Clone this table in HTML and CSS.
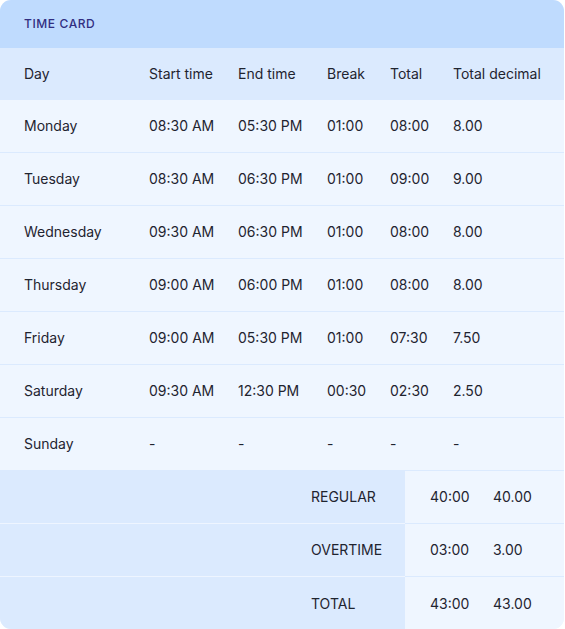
FILE: index.html
```html
<!DOCTYPE html>
<html>
<head>
<meta charset="utf-8">
<link rel="stylesheet" href="styles.css">
</head>
<body>
<div class="card">
  <div class="title">TIME CARD</div>
  <div class="row head">
    <div class="cell first">Day</div><div class="cell">Start time</div><div class="cell">End time</div><div class="cell">Break</div><div class="cell">Total</div><div class="cell">Total decimal</div>
  </div>
  <div class="row">
    <div class="cell first">Monday</div><div class="cell">08:30 AM</div><div class="cell">05:30 PM</div><div class="cell">01:00</div><div class="cell">08:00</div><div class="cell">8.00</div>
  </div>
  <div class="row">
    <div class="cell first">Tuesday</div><div class="cell">08:30 AM</div><div class="cell">06:30 PM</div><div class="cell">01:00</div><div class="cell">09:00</div><div class="cell">9.00</div>
  </div>
  <div class="row">
    <div class="cell first">Wednesday</div><div class="cell">09:30 AM</div><div class="cell">06:30 PM</div><div class="cell">01:00</div><div class="cell">08:00</div><div class="cell">8.00</div>
  </div>
  <div class="row">
    <div class="cell first">Thursday</div><div class="cell">09:00 AM</div><div class="cell">06:00 PM</div><div class="cell">01:00</div><div class="cell">08:00</div><div class="cell">8.00</div>
  </div>
  <div class="row">
    <div class="cell first">Friday</div><div class="cell">09:00 AM</div><div class="cell">05:30 PM</div><div class="cell">01:00</div><div class="cell">07:30</div><div class="cell">7.50</div>
  </div>
  <div class="row">
    <div class="cell first">Saturday</div><div class="cell">09:30 AM</div><div class="cell">12:30 PM</div><div class="cell">00:30</div><div class="cell">02:30</div><div class="cell">2.50</div>
  </div>
  <div class="row">
    <div class="cell first">Sunday</div><div class="cell">-</div><div class="cell">-</div><div class="cell">-</div><div class="cell">-</div><div class="cell">-</div>
  </div>
  <div class="sum">
    <div class="label">REGULAR</div>
    <div class="vals"><span class="val">40:00</span><span class="val">40.00</span></div>
  </div>
  <div class="sum">
    <div class="label">OVERTIME</div>
    <div class="vals"><span class="val">03:00</span><span class="val">3.00</span></div>
  </div>
  <div class="sum last">
    <div class="label">TOTAL</div>
    <div class="vals"><span class="val">43:00</span><span class="val">43.00</span></div>
  </div>
</div>
</body>
</html>
```
FILE: styles.css
```css
html, body {
  margin: 0;
  padding: 0;
  background: #ffffff;
}
body {
  font-family: Inter, "Noto Sans", sans-serif;
  font-size: 14px;
  color: #1f2430;
}
.card {
  width: 564px;
  height: 629px;
  border-radius: 11px;
  overflow: hidden;
  background: #eff6ff;
}
.title {
  height: 48px;
  box-sizing: border-box;
  padding: 0 0 2px 24px;
  display: flex;
  align-items: center;
  background: #bfdbfe;
  color: #312e81;
  font-size: 12px;
  font-weight: 500;
  letter-spacing: 0.6px;
}
.row {
  display: grid;
  grid-template-columns: 125px 89px 89px 63px 63px 1fr;
  height: 53px;
  box-sizing: border-box;
  border-bottom: 1px solid #dbeafe;
  background: #eff6ff;
}
.row.head {
  height: 52px;
  border-bottom: none;
  background: #dbeafe;
}
.cell {
  display: flex;
  align-items: center;
  padding: 0 0 1px 24px;
  white-space: nowrap;
}
.sum {
  display: grid;
  grid-template-columns: 405px 1fr;
  height: 53px;
}
.sum .label {
  background: #dbeafe;
  border-bottom: 1px solid #eef5ff;
  padding: 0 0 1px 311px;
  display: flex;
  align-items: center;
}
.sum .vals {
  background: #eff6ff;
  border-bottom: 1px solid #dbeafe;
  padding: 0 0 1px 25px;
  display: flex;
  align-items: center;
}
.sum .val {
  width: 63px;
  flex-shrink: 0;
}
.sum.last .label,
.sum.last .vals {
  border-bottom: none;
}
.label, .vals {
  box-sizing: border-box;
  white-space: nowrap;
}
```
